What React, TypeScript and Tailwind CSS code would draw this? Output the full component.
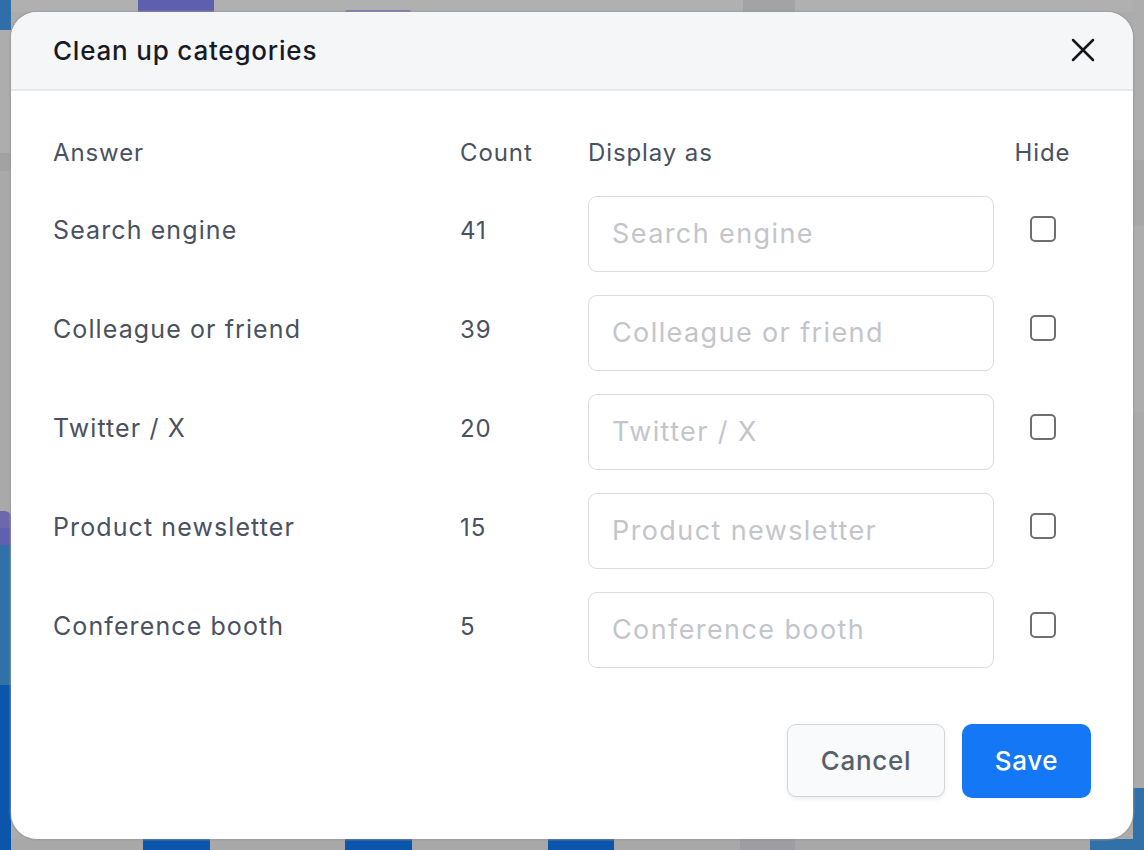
import React, { useState } from 'react';

interface Category {
  answer: string;
  count: number;
}

const categories: Category[] = [
  { answer: 'Search engine', count: 41 },
  { answer: 'Colleague or friend', count: 39 },
  { answer: 'Twitter / X', count: 20 },
  { answer: 'Product newsletter', count: 15 },
  { answer: 'Conference booth', count: 5 },
];

const font = { fontFamily: 'Inter, "Noto Sans", sans-serif' };

// dimmed dashboard peeking out around the dialog
const Backdrop: React.FC = () => (
  <div className="flex h-[850px] w-[1144px] bg-[#acacac]">
    <div className="flex w-[11px] flex-col">
      <div className="h-[30px] bg-[#2f6ea8]" />
      <div className="h-[123px] bg-[#adadad]" />
      <div className="h-[18px] bg-[#a2a2a4]" />
      <div className="h-[340px] bg-[#a9a9a9]" />
      <div className="h-[17px] rounded-tr-md bg-[#6f67ae]" />
      <div className="h-[17px] bg-[#6060b0]" />
      <div className="h-[140px] bg-[#3270a8]" />
      <div className="flex-1 bg-[#0b55ab]" />
    </div>
    <div className="flex flex-1 flex-col">
      <div className="flex h-[12px] bg-[#b0b0b0]">
        <div className="ml-[127px] w-[76px] bg-[#5f5fb0]" />
        <div className="ml-[131px] mt-[10px] w-[66px] rounded-t bg-[#7c74b8]" />
        <div className="ml-[332px] w-[52px] bg-[#a3a3a5]" />
      </div>
      <div className="flex-1" />
      <div className="flex h-[11px] bg-[#a8a8a8]">
        <div className="ml-[132px] w-[67px] bg-[#0b55ab]" />
        <div className="ml-[135px] w-[67px] bg-[#0b55ab]" />
        <div className="ml-[136px] w-[66px] bg-[#0b55ab]" />
        <div className="ml-[126px] w-[55px] bg-[#9d9da2]" />
        <div className="flex-1" />
        <div className="w-[43px] bg-[#3270a8]" />
      </div>
    </div>
    <div className="flex w-[11px] flex-col">
      <div className="h-[160px] bg-[#adadad]" />
      <div className="h-[66px] bg-[#a7a7a7]" />
      <div className="h-[186px] bg-[#adadad]" />
      <div className="h-[376px] bg-[#aaaaaa]" />
      <div className="flex-1 bg-[#3270a8]" />
    </div>
  </div>
);

const Checkbox: React.FC = () => {
  const [checked, setChecked] = useState(false);
  return (
    <button
      type="button"
      onClick={() => setChecked(!checked)}
      className="h-[26px] w-[26px] rounded-[5px] border-2 border-[#6f6f6f] bg-white"
    >
      {checked && (
        <svg viewBox="0 0 24 24" className="h-full w-full" fill="none" stroke="#374151" strokeWidth="3">
          <path d="M5 12l5 5 9-10" />
        </svg>
      )}
    </button>
  );
};

export default function App() {
  return (
    <div className="relative h-[850px] w-[1144px] overflow-hidden" style={font}>
      <Backdrop />
      <div className="absolute inset-0 flex items-center justify-center">
        <div className="flex h-[827px] w-[1122px] flex-col overflow-hidden rounded-[26px] bg-white shadow-[0_0_0_1.5px_rgba(150,150,150,0.5)]">
          <div className="flex h-[79px] items-center justify-between border-b-2 border-[#e7e9ec] bg-[#f5f6f8] pl-[42px] pr-[35px]">
            <h2 className="text-[26px] font-medium tracking-[0.8px] text-[#191a26]">Clean up categories</h2>
            <button type="button" className="flex h-[30px] w-[30px] items-center justify-center">
              <svg viewBox="0 0 24 24" width="24" height="24" fill="none" stroke="#16161f" strokeWidth="2.5" strokeLinecap="round">
                <path d="M2 2l20 20M22 2L2 22" />
              </svg>
            </button>
          </div>

          <div className="flex flex-1 flex-col px-[42px] pt-[42px]">
            <div className="grid grid-cols-[407px_128px_406px_1fr] items-center gap-y-[23px] text-[24px] tracking-[0.9px] text-[#4a5160]">
              <div className="h-[40px] leading-[40px]">Answer</div>
              <div className="h-[40px] leading-[40px]">Count</div>
              <div className="h-[40px] leading-[40px]">Display as</div>
              <div className="h-[40px] text-center leading-[40px]">Hide</div>
              {categories.map((c) => (
                <React.Fragment key={c.answer}>
                  <div className="pb-[5px] text-[25px] tracking-[1.1px]">{c.answer}</div>
                  <div className="pb-[5px]">{c.count}</div>
                  <input
                    placeholder={c.answer}
                    className="h-[76px] w-full rounded-[9px] border-[1.5px] border-[#d9dce2] px-[23px] text-[27px] tracking-[1.4px] text-[#374151] outline-none placeholder:text-[#c3c5cb]"
                  />
                  <div className="flex justify-center pb-[9px]">
                    <Checkbox />
                  </div>
                </React.Fragment>
              ))}
            </div>
          </div>

          <div className="flex justify-end gap-[17px] pb-[41px] pr-[42px]">
            <button
              type="button"
              className="h-[73px] w-[158px] rounded-[9px] border-[1.5px] border-[#d3d5d9] bg-[#f9fafb] text-[26px] font-medium tracking-[0.7px] text-[#5a606a] shadow-[0_2px_4px_rgba(0,0,0,0.08)]"
            >
              Cancel
            </button>
            <button
              type="button"
              className="h-[74px] w-[129px] rounded-[10px] bg-[#1477f6] text-[26px] font-medium tracking-[0.7px] text-white"
            >
              Save
            </button>
          </div>
        </div>
      </div>
    </div>
  );
}
